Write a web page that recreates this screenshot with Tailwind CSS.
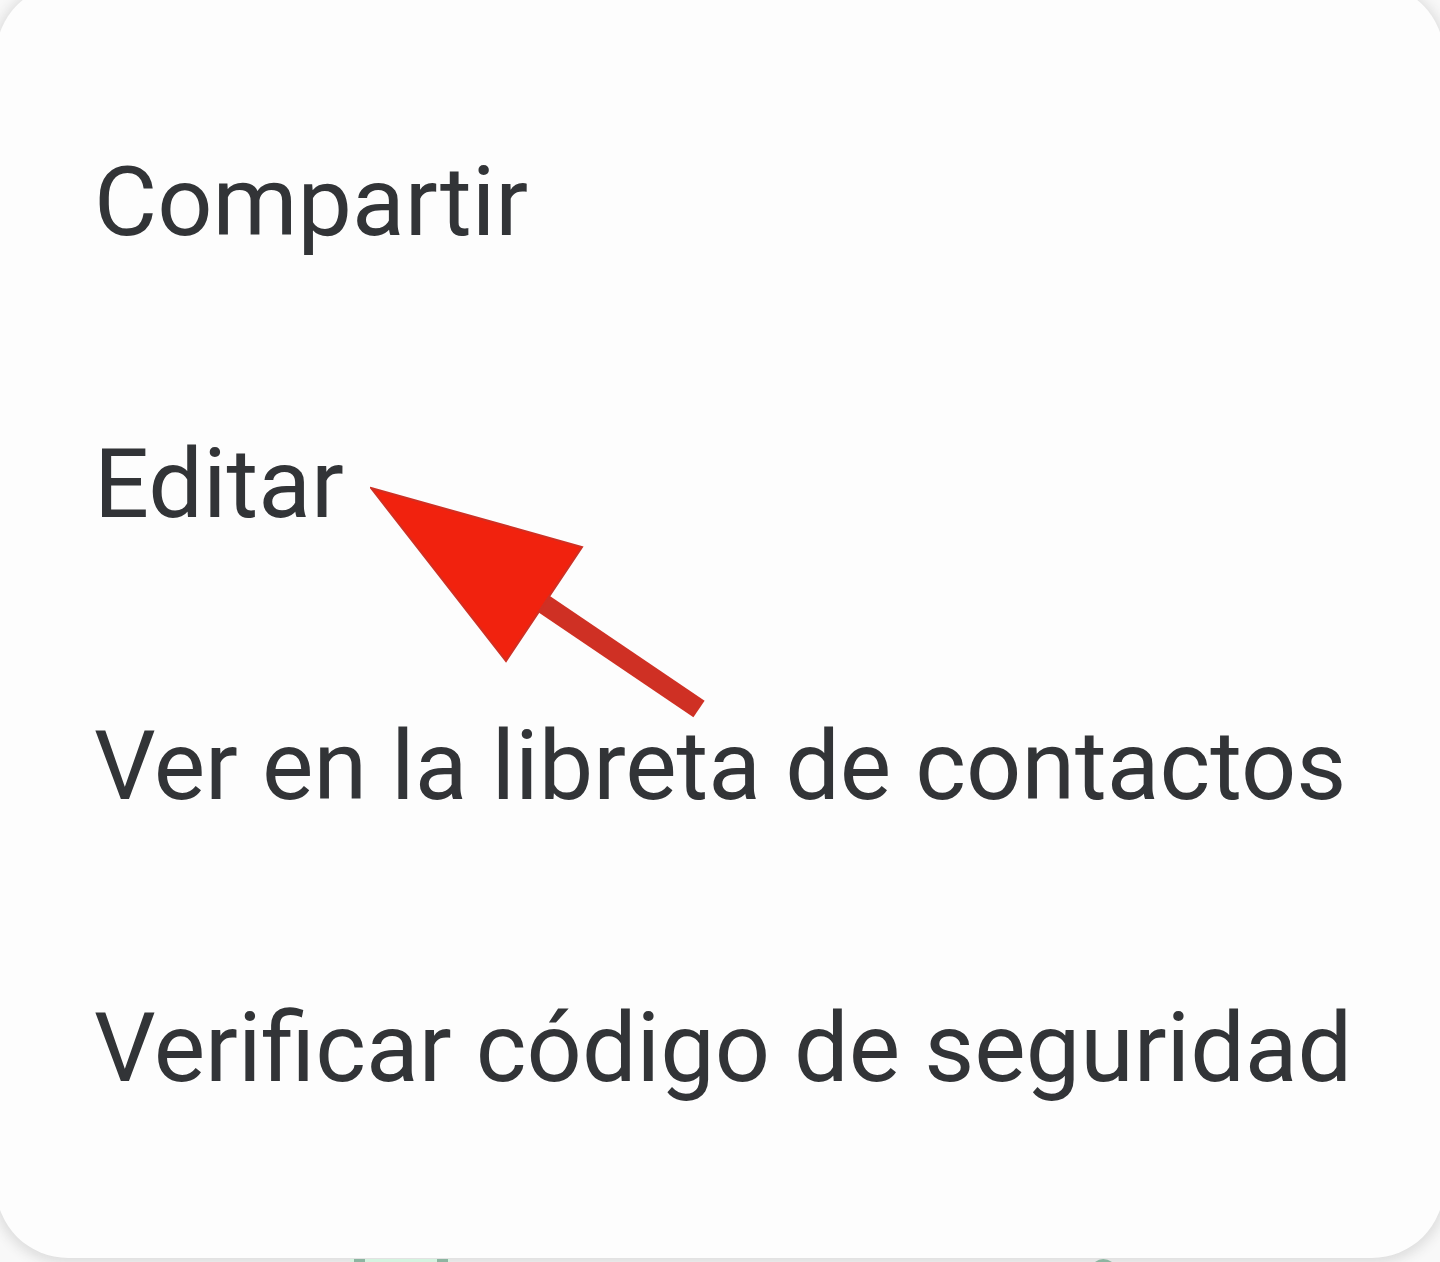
<!DOCTYPE html>
<html lang="es">
  <head>
    <meta charset="UTF-8" />
    <meta name="viewport" content="width=device-width, initial-scale=1.0" />
    <title>Menú de contacto</title>
    <script src="https://cdn.jsdelivr.net/npm/@tailwindcss/browser@4"></script>
  </head>
  <body class="bg-[#f8f8f8] font-[Roboto,sans-serif] text-[#323437]">
    <main class="relative min-h-screen overflow-hidden">
      <menu class="-mx-1 -mt-4 flex flex-col rounded-[72px] bg-[#fdfdfd] pt-[77px] pb-[69px] text-[97px] leading-[282px] shadow-[0_2px_12px_4px_#dedede]">
        <li><button class="block w-full px-[98px] text-left whitespace-nowrap">Compartir</button></li>
        <li><button class="block w-full px-[98px] text-left whitespace-nowrap">Editar</button></li>
        <li><button class="block w-full px-[98px] text-left whitespace-nowrap">Ver en la libreta de contactos</button></li>
        <li><button class="block w-full px-[98px] text-left whitespace-nowrap">Verificar código de seguridad</button></li>
      </menu>
      <!-- Arrow pointing at "Editar" -->
      <svg class="pointer-events-none absolute top-[485px] left-[370px] w-[336px]" viewBox="370 485 336 235" aria-hidden="true">
        <path d="M538 600 699 709" stroke="#cf3024" stroke-width="20" />
        <path d="M371 488 582 547 506 661Z" fill="#f1220e" stroke="#cf3024" stroke-width="2" />
      </svg>
      <!-- Green content showing under the menu -->
      <svg class="pointer-events-none absolute bottom-0 left-[350px] w-[770px]" viewBox="0 0 770 6" aria-hidden="true">
        <path d="M0 3H100V6H0Z" fill="#d5f3e0" />
        <path d="M4 3H15V6H4ZM87 3H98V6H87ZM745 6Q753 0 762 6Z" fill="#8db5a1" />
      </svg>
    </main>
  </body>
</html>
